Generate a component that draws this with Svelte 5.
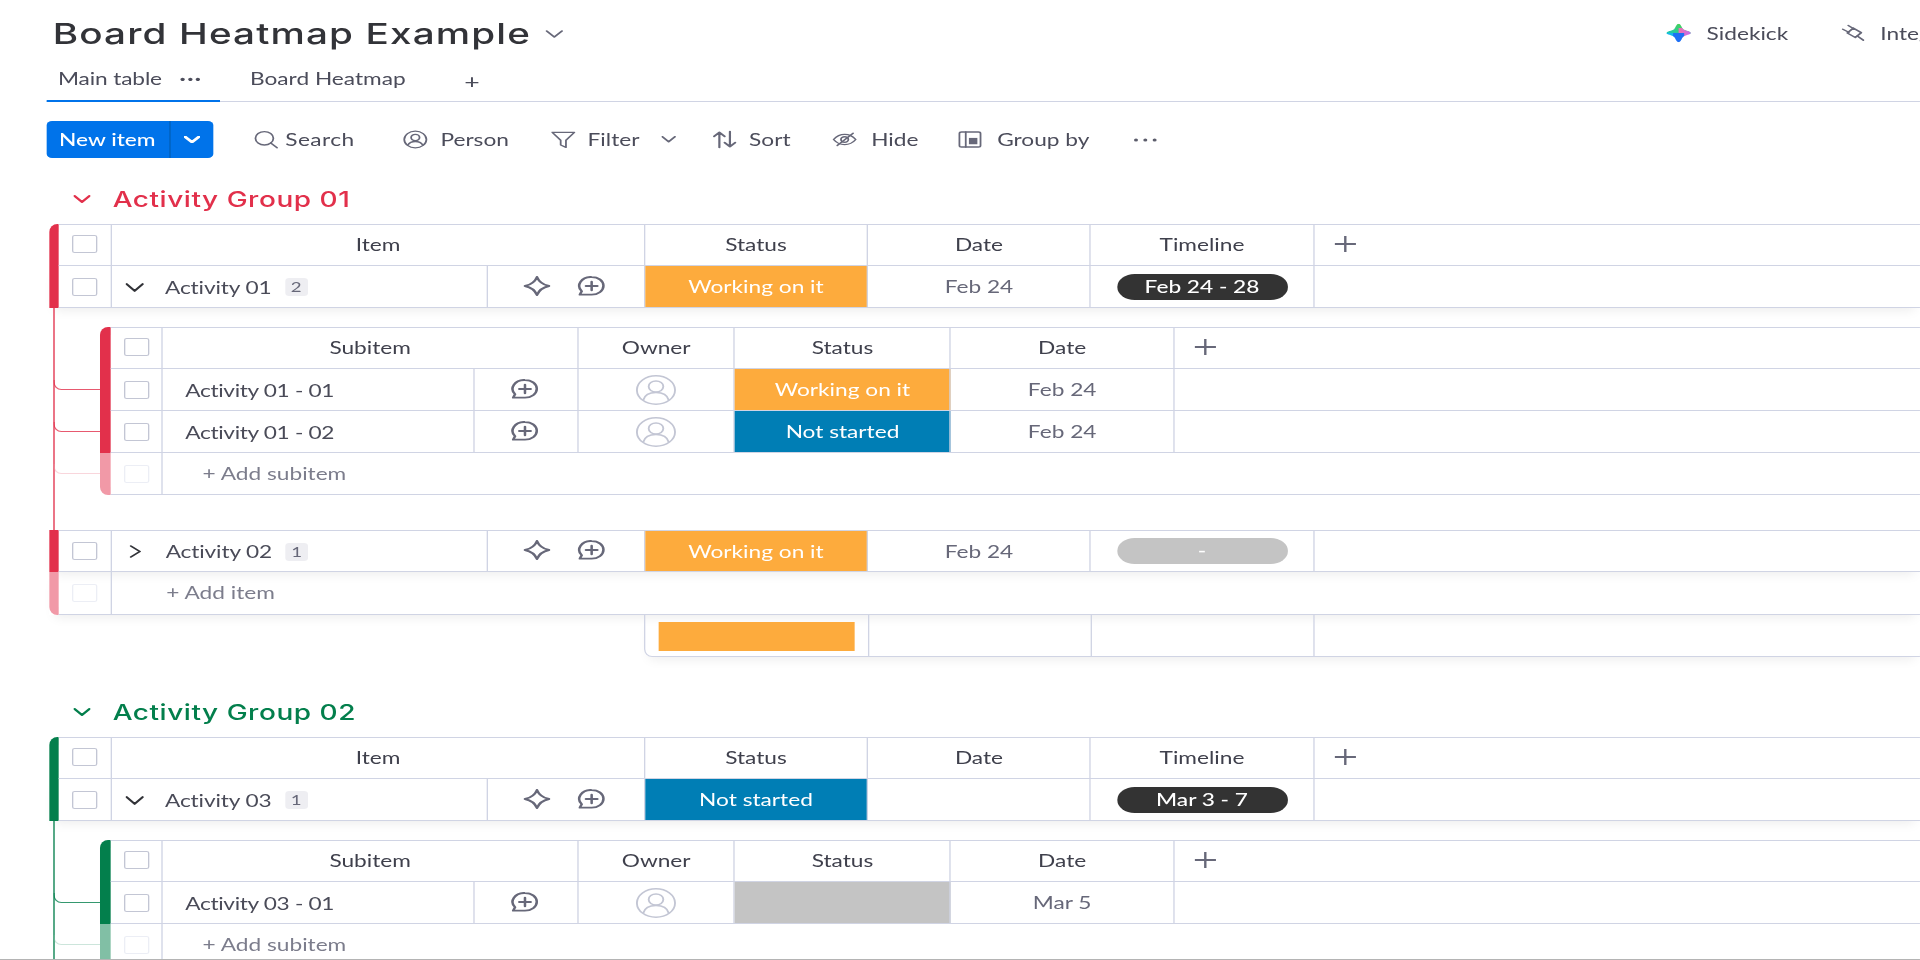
<script>
  // the whole board is laid out at 1440 wide and stretched to 1920 (see .page)
  const tools = [
    { label: 'Search', icon: 'search' },
    { label: 'Person', icon: 'person' },
    { label: 'Filter', icon: 'filter', caret: true },
    { label: 'Sort', icon: 'sort' },
    { label: 'Hide', icon: 'hide' },
    { label: 'Group by', icon: 'group' }
  ];

  const groups = [
    {
      name: 'Activity Group 01',
      color: '#e2304b',
      dim: '#f199a7',
      summary: true,
      items: [
        {
          name: 'Activity 01', count: 2, open: true, status: 'working', date: 'Feb 24', timeline: 'Feb 24 - 28',
          subs: [
            { name: 'Activity 01 - 01', status: 'working', date: 'Feb 24' },
            { name: 'Activity 01 - 02', status: 'stuck', date: 'Feb 24' }
          ]
        },
        { name: 'Activity 02', count: 1, open: false, status: 'working', date: 'Feb 24', timeline: '-', subs: [] }
      ]
    },
    {
      name: 'Activity Group 02',
      color: '#037f4c',
      dim: '#81bfa5',
      summary: false,
      items: [
        {
          name: 'Activity 03', count: 1, open: true, status: 'stuck', date: '', timeline: 'Mar 3 - 7',
          subs: [{ name: 'Activity 03 - 01', status: 'none', date: 'Mar 5' }]
        }
      ]
    }
  ];

  const statusText = { working: 'Working on it', stuck: 'Not started', none: '' };
</script>

{#snippet star()}
  <svg class="ico act" viewBox="1.5 1.5 21 21"><path d="M12 2.5C13.5 7.5 16.5 10.5 21.5 12 16.5 13.5 13.5 16.5 12 21.5 10.5 16.5 7.5 13.5 2.5 12 7.5 10.5 10.5 7.5 12 2.5z" /></svg>
{/snippet}

{#snippet chat()}
  <svg class="ico act" viewBox="2 1.5 21 21"><path d="M12.5 2.5a9.3 9.3 0 0 1 0 18.6H3.2l1.5-3.6a9.3 9.3 0 0 1 7.8-15z" /><path d="M12.5 7.5v9M8 12h9" /></svg>
{/snippet}

{#snippet avatar()}
  <svg class="avatar" viewBox="0 0 30 30"><circle cx="15" cy="15" r="14.3" /><circle cx="15" cy="11.5" r="5.5" /><path d="M5.5 25c1-5 4.5-7.5 9.5-7.5s8.5 2.5 9.5 7.5" /></svg>
{/snippet}

{#snippet plus()}
  <svg class="plus" viewBox="0 0 16 16"><path d="M8 0v16M0 8h16" /></svg>
{/snippet}

{#snippet caret(cls)}
  <svg class="ico caret {cls}" viewBox="0 0 20 12" preserveAspectRatio="none"><path d="M1.5 1.5L10 10.5l8.5-9" /></svg>
{/snippet}

{#snippet check(dim)}
  <div class="cell check-cell"><span class="check" class:dim></span></div>
{/snippet}

<div class="page">
  <header class="head">
    <h1>Board Heatmap Example</h1>
    {@render caret('title-caret')}
    <div class="head-right">
      <svg class="sidekick" viewBox="0 0 24 24">
        <defs>
          <clipPath id="sk-clip"><path d="M12 1c2 0 2.5 4 4 6.5 2 2 7 2.5 7 4.5s-5 2.5-7 4.5C14.5 19 14 23 12 23s-2.5-4-4-6.5C6 14.5 1 14 1 12s5-2.5 7-4.5C9.5 5 10 1 12 1z" /></clipPath>
          <linearGradient id="sk-a" x1="0" y1="1" x2="1" y2="0"><stop offset="0" stop-color="#14c8c0" /><stop offset="0.7" stop-color="#46d05c" /><stop offset="1" stop-color="#ffc42e" /></linearGradient>
          <linearGradient id="sk-b" x1="0" y1="0" x2="1" y2="0"><stop offset="0" stop-color="#f56fae" /><stop offset="1" stop-color="#b86bf7" /></linearGradient>
        </defs>
        <g clip-path="url(#sk-clip)">
          <rect x="0" y="0" width="24" height="13" fill="url(#sk-a)" />
          <rect x="12" y="6" width="12" height="12" fill="url(#sk-b)" />
          <rect x="0" y="12" width="9" height="8" fill="#17b9ea" />
          <rect x="7" y="12" width="10" height="12" fill="#1d6ff5" />
        </g>
      </svg>
      <span class="right-label">Sidekick</span>
      <svg class="ico plug" viewBox="0 0 24 24"><path d="M6 12l6-6.5 8 6-6 6.5z" /><path d="M1.5 7l6 4M7 2l5 4M16 16l6 5.5" /></svg>
      <span class="right-label">Integrate</span>
    </div>
  </header>

  <nav class="tabs">
    <div class="tab active">Main table <span class="tab-dots">···</span></div>
    <div class="tab second">Board Heatmap</div>
    <div class="tab-add">+</div>
  </nav>

  <div class="toolbar">
    <div class="new-item">
      <span class="new-main">New item</span>
      <span class="new-caret">{@render caret('white')}</span>
    </div>
    {#each tools as t}
      <div class="tool t-{t.icon}">
        <svg class="ico tool-ico" viewBox="0 0 24 24">
          {#if t.icon === 'search'}
            <circle cx="10.5" cy="10.5" r="8.5" /><path d="M16.5 16.5l6 6" />
          {:else if t.icon === 'person'}
            <circle cx="12" cy="12" r="10.5" /><circle cx="12" cy="9.5" r="4" /><path d="M5 19c1.5-3.5 4-4.5 7-4.5s5.5 1 7 4.5" />
          {:else if t.icon === 'filter'}
            <path d="M1.5 3h21l-8 10v9l-5-3v-6z" />
          {:else if t.icon === 'sort'}
            <path d="M7 22V3M2 8l5-5 5 5M17 2v19M12 16l5 5 5-5" />
          {:else if t.icon === 'hide'}
            <path d="M1.5 12c3-4.5 6.5-6.5 10.5-6.5s7.5 2 10.5 6.5c-3 4.5-6.5 6.5-10.5 6.5S4.5 16.5 1.5 12z" /><circle cx="12" cy="12" r="3.5" /><path d="M5 19.5L20 4" />
          {:else}
            <rect x="2" y="2.5" width="20" height="19" rx="2" /><path d="M8 2.5v19" /><rect class="solid" x="11" y="10" width="8" height="8" />
          {/if}
        </svg>
        <span>{t.label}</span>
        {#if t.caret}{@render caret('tool-caret')}{/if}
      </div>
    {/each}
    <svg class="tool-dots" viewBox="0 0 18 4"><circle cx="2" cy="2" r="1.5" /><circle cx="9" cy="2" r="1.5" /><circle cx="16" cy="2" r="1.5" /></svg>
  </div>

  {#each groups as g}
    <section class="group" style="--c: {g.color}; --dim: {g.dim}">
      <div class="group-head">
        {@render caret('group-caret')}
        <h2>{g.name}</h2>
      </div>

      <div class="row">
        <div class="bar first"></div>
        <div class="cells top head-row">
          {@render check(false)}
          <div class="cell col-item">Item</div>
          <div class="cell col-status">Status</div>
          <div class="cell col-date">Date</div>
          <div class="cell col-time">Timeline</div>
          <div class="add-col">{@render plus()}</div>
        </div>
      </div>

      {#each g.items as item, i}
        <div class="row item-row">
          <div class="bar"></div>
          <div class="cells" class:top={i > 0}>
            {@render check(false)}
            <div class="cell col-name">
              {#if item.open}
                {@render caret('item-caret')}
              {:else}
                <svg class="ico item-caret-side" viewBox="0 0 12 20" preserveAspectRatio="none"><path d="M1.5 1.5l9 8.5-9 8.5" /></svg>
              {/if}
              <span class="name">{item.name}</span>
              <span class="count">{item.count}</span>
            </div>
            <div class="cell col-acts">{@render star()}{@render chat()}</div>
            <div class="cell col-status fill {item.status}">{statusText[item.status]}</div>
            <div class="cell col-date muted">{item.date}</div>
            <div class="cell col-time">
              <span class="pill" class:empty={item.timeline === '-'}>{item.timeline}</span>
            </div>
          </div>
        </div>

        {#if item.subs.length}
          <div class="subs">
            <div class="row">
              <div class="bar first"></div>
              <div class="cells top head-row">
                {@render check(false)}
                <div class="cell sub-item">Subitem</div>
                <div class="cell sub-owner">Owner</div>
                <div class="cell sub-status">Status</div>
                <div class="cell sub-date">Date</div>
                <div class="add-col">{@render plus()}</div>
              </div>
            </div>
            {#each item.subs as s}
              <div class="row branch">
                <div class="bar"></div>
                <div class="cells">
                  {@render check(false)}
                  <div class="cell sub-name">{s.name}</div>
                  <div class="cell sub-acts">{@render chat()}</div>
                  <div class="cell sub-owner">{@render avatar()}</div>
                  <div class="cell sub-status fill {s.status}">{statusText[s.status]}</div>
                  <div class="cell sub-date muted">{s.date}</div>
                </div>
              </div>
            {/each}
            <div class="row branch faint">
              <div class="bar last"></div>
              <div class="cells">
                {@render check(true)}
                <div class="add-sub">+ Add subitem</div>
              </div>
            </div>
          </div>
        {/if}
      {/each}

      {#if g.summary}
        <div class="row add-row">
          <div class="bar last"></div>
          <div class="cells">
            {@render check(true)}
            <div class="add-item">+ Add item</div>
          </div>
        </div>
        <div class="summary">
          <div class="cell col-status"><span class="sum-bar"></span></div>
          <div class="cell col-date"></div>
          <div class="cell col-time"></div>
        </div>
      {/if}
    </section>
  {/each}
</div>

<style>
  :global(body) {
    margin: 0;
    overflow: hidden;
    background: #fff;
  }

  .page {
    width: 1440px;
    height: 960px;
    box-sizing: border-box;
    overflow: hidden;
    transform: scaleX(1.3333);
    transform-origin: 0 0;
    filter: blur(0.35px);
    border-bottom: 1px solid #b4b4b4;
    font-family: Lato, "Liberation Sans", sans-serif;
    font-size: 17px;
    color: #4a4b58;
  }

  .ico {
    fill: none;
    stroke: #676879;
    stroke-width: 2;
    stroke-linecap: round;
    stroke-linejoin: round;
    flex-shrink: 0;
  }
  .caret { stroke-width: 2.4; }

  /* header */
  .head {
    height: 66px;
    display: flex;
    align-items: center;
    padding-left: 39.5px;
  }
  h1 {
    margin: 0;
    flex-shrink: 0;
    white-space: nowrap;
    font: 500 29px Inter, sans-serif;
    letter-spacing: 0.85px;
    color: #323338;
  }
  .title-caret { width: 13.5px; height: 8px; margin-left: 11px; margin-top: 1px; }
  .head-right {
    margin-left: auto;
    width: 191px;
    flex-shrink: 0;
    display: flex;
    align-items: center;
    white-space: nowrap;
  }
  .sidekick { width: 20px; height: 20px; margin-right: 11px; flex-shrink: 0; }
  .right-label { font-size: 17px; color: #4b4c5a; }
  .plug { width: 18px; height: 18px; margin-left: 40px; margin-right: 11px; stroke-width: 2; }

  /* tabs */
  .tabs {
    margin-left: 34.5px;
    height: 36px;
    box-sizing: border-box;
    display: flex;
    border-bottom: 1.5px solid #d0d4e4;
    line-height: 26px;
    color: #4b4c5a;
  }
  .tab { height: 36px; box-sizing: border-box; }
  .tab.active {
    width: 130.5px;
    padding-left: 9px;
    border-bottom: 2px solid #0073ea;
    letter-spacing: -0.1px;
  }
  .tab-dots { margin-left: 9px; font-weight: 700; letter-spacing: 1px; }
  .tab.second { padding-left: 22.5px; }
  .tab-add { margin-left: 44px; font-size: 20px; line-height: 30px; }

  /* toolbar */
  .toolbar {
    margin: 19px 0 0 34.5px;
    height: 37px;
    display: flex;
    align-items: center;
    gap: 31px;
    color: #4b4c5a;
  }
  .new-item {
    width: 125px;
    height: 37px;
    display: flex;
    border-radius: 4px;
    overflow: hidden;
    background: #0073ea;
    color: #fff;
    font-weight: 500;
    margin-right: -1px;
  }
  .new-main {
    width: 93px;
    box-sizing: border-box;
    border-right: 1px solid #0060b9;
    display: flex;
    align-items: center;
    justify-content: center;
  }
  .new-caret { flex: 1; display: flex; align-items: center; justify-content: center; }
  .white { width: 12px; height: 7px; stroke: #fff; stroke-width: 4; }
  .tool { display: flex; align-items: center; gap: 9px; }
  .tool-ico { width: 19px; height: 19px; stroke-width: 1.7; }
  .t-search { gap: 5.5px; margin-right: 5.5px; letter-spacing: 0.3px; }
  .t-filter { margin-right: -4.25px; }
  .t-hide { gap: 10.5px; margin-right: -1.5px; }
  .t-group { gap: 10.5px; }
  .t-sort .tool-ico { stroke-width: 2.1; }
  .solid { fill: #676879; stroke: none; }
  .tool-caret { width: 11px; height: 6.5px; margin-left: 7.5px; stroke-width: 3; }
  .tool-dots { width: 18px; height: 4px; fill: #5b5c6b; margin-left: 2px; }

  /* groups */
  .group {
    margin: 22px 0 36px 36.75px;
    height: 477px;
  }
  .group + .group { margin-top: 0; }
  .group-head {
    height: 44px;
    padding: 0 0 6px 18.25px;
    box-sizing: border-box;
    display: flex;
    align-items: center;
    gap: 16.5px;
  }
  .group-caret { width: 13px; height: 8px; stroke: var(--c); stroke-width: 2.8; }
  h2 {
    margin: 0;
    font: 500 21px Inter, sans-serif;
    letter-spacing: 0.4px;
    color: var(--c);
  }

  .row { display: flex; height: 42px; }
  .bar { width: 7.5px; flex-shrink: 0; background: var(--c); }
  .bar.first { border-top-left-radius: 6px 8px; }
  .bar.last { background: var(--dim); border-bottom-left-radius: 6px 8px; }
  .cells {
    flex: 1;
    display: flex;
    box-sizing: border-box;
    border-bottom: 1.5px solid #d0d4e4;
    min-width: 0;
  }
  .cells.top { border-top: 1.5px solid #d0d4e4; }
  .head-row .cell { padding-bottom: 2px; color: #3f404c; }
  .item-row, .add-row { box-shadow: 0 6px 10px -4px rgba(0, 0, 0, 0.08); }
  .add-row { height: 43px; }

  .cell {
    box-sizing: border-box;
    border-right: 1px solid #d0d4e4;
    flex-shrink: 0;
    display: flex;
    align-items: center;
    justify-content: center;
    white-space: nowrap;
  }
  .check-cell { width: 40px; }
  .subs .check-cell { width: 39.5px; }
  .check {
    width: 19px;
    height: 18px;
    box-sizing: border-box;
    border: 1px solid #c3c6d4;
    border-radius: 2px;
  }
  .check.dim { border-color: #eceef5; }

  .col-item { width: 399.5px; }
  .col-name { width: 281.5px; justify-content: flex-start; padding: 1px 0 0 10px; }
  .col-acts { width: 118px; justify-content: flex-start; gap: 20px; padding-left: 26px; }
  .col-status { width: 167.5px; }
  .col-date { width: 167px; }
  .col-time { width: 167.5px; }

  .name { letter-spacing: -0.1px; }
  .item-caret { width: 14px; height: 9px; stroke: #323338; stroke-width: 2.6; margin-right: 15.5px; }
  .item-caret-side { width: 9px; height: 13px; stroke: #323338; stroke-width: 2.2; margin: 0 18.5px 0 2.5px; }
  .count {
    margin-left: 10px;
    min-width: 12px;
    padding: 0 2.5px;
    height: 18px;
    line-height: 18px;
    border-radius: 3px;
    background: #eeeef2;
    font-size: 14px;
    text-align: center;
    color: #676879;
  }
  .act { width: 21.5px; height: 20px; stroke-width: 2; margin-bottom: 2px; }
  .muted { color: #676879; }

  .fill { color: #fff; }
  .working { background: #fdab3d; }
  .stuck { background: #007eb5; }
  .none { background: #c4c4c4; }

  .pill {
    width: 128px;
    height: 26px;
    line-height: 26px;
    border-radius: 13px;
    background: #333;
    color: #fff;
    text-align: center;
    font-weight: 500;
  }
  .pill.empty { background: #c4c4c4; }

  .add-col { flex: 1; padding: 11px 0 0 15px; box-sizing: border-box; }
  .plus { display: block; width: 16px; height: 16px; fill: none; stroke: #676879; stroke-width: 1.8; }

  /* subitems */
  .subs {
    position: relative;
    padding: 19px 0 35px 38.65px;
  }
  .subs::before {
    content: '';
    position: absolute;
    left: 3px;
    top: 0;
    bottom: 0;
    width: 1px;
    background: var(--c);
  }
  .branch { position: relative; }
  .branch::before {
    content: '';
    position: absolute;
    left: -35.65px;
    width: 35.65px;
    top: 11px;
    height: 10px;
    box-sizing: border-box;
    border-left: 1px solid var(--c);
    border-bottom: 1px solid var(--c);
    border-bottom-left-radius: 6px 8px;
    opacity: 0.8;
  }
  .branch.faint::before { border-color: var(--dim); opacity: 0.4; }

  .sub-item { width: 311.5px; }
  .sub-name { width: 234px; justify-content: flex-start; padding: 1px 0 0 16.5px; letter-spacing: -0.25px; }
  .sub-acts { width: 77.5px; padding-right: 2px; }
  .sub-owner { width: 117.5px; }
  .sub-status { width: 162px; }
  .sub-date { width: 167.5px; }
  .avatar { width: 30px; height: 30px; fill: none; stroke: #c3c6d4; stroke-width: 1.4; }

  .add-sub { padding-left: 29.5px; line-height: 42px; color: #7c7d8c; }
  .add-item { padding-left: 40.5px; line-height: 42px; color: #7c7d8c; }

  .summary {
    margin-left: 446.25px;
    height: 42px;
    box-sizing: border-box;
    display: flex;
    border-bottom: 1.5px solid #d0d4e4;
    border-left: 1px solid #d0d4e4;
    border-bottom-left-radius: 6px 8px;
    box-shadow: 0 6px 10px -4px rgba(0, 0, 0, 0.08);
  }
  .summary .cell { border-right: 1px solid #d0d4e4; }
  .sum-bar { width: 147px; height: 29px; background: #fdab3d; margin-top: 1px; }
</style>
